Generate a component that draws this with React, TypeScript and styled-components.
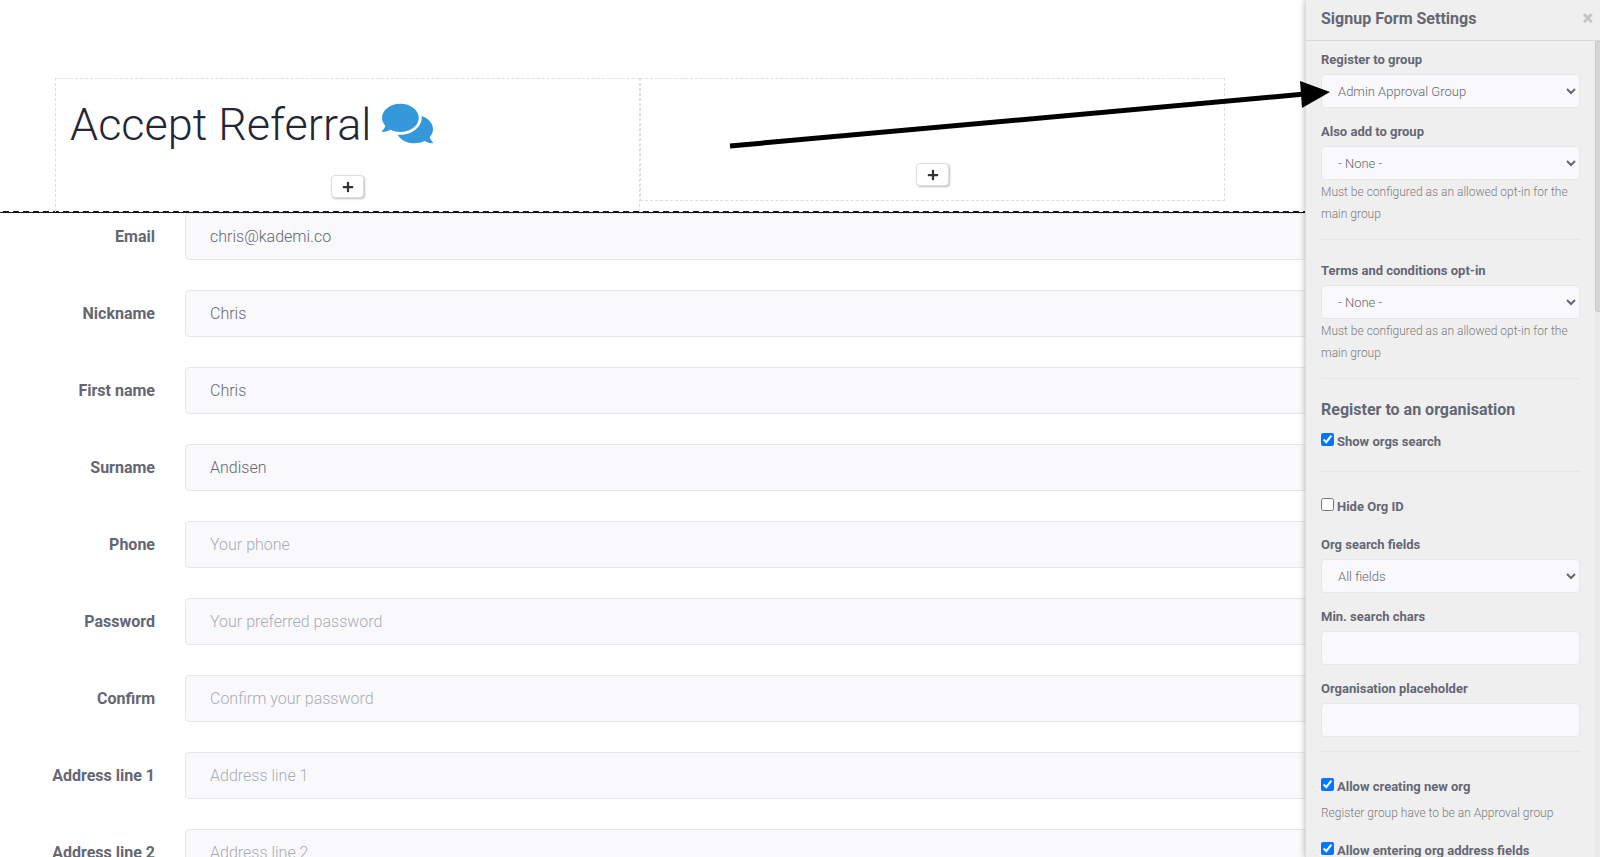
import React from 'react';
import styled, { createGlobalStyle } from 'styled-components';
import { FaComments, FaPlus } from 'react-icons/fa';

const GlobalStyle = createGlobalStyle`
  *, *::before, *::after { box-sizing: border-box; }
  body {
    margin: 0;
    background: #fff;
    color: #646773;
    font-family: Roboto, "Liberation Sans", sans-serif;
    font-size: 16px;
    font-weight: 300;
  }
  input, select, button { font: inherit; color: inherit; }
`;

const Page = styled.div`
  display: flex;
  height: 100vh;
  overflow: hidden;
`;

const Main = styled.main`
  flex: 1;
  min-width: 0;
  overflow: hidden;
`;

const Hero = styled.section`
  display: grid;
  grid-template-columns: 1fr 1fr;
  align-items: start;
  height: 213px;
  padding: 78px 80px 0 55px;
  overflow: hidden;
  border-bottom: 1px solid #15151c;
  background: repeating-linear-gradient(to right, transparent 0 3px, #15151c 3px 9px, transparent 9px 10px)
    bottom / 100% 1px no-repeat;
`;

const Column = styled.div<{ $tall?: boolean }>`
  display: flex;
  flex-direction: column;
  align-items: center;
  justify-content: flex-end;
  height: ${(p) => (p.$tall ? 134 : 123)}px;
  padding: 16px 14px 14px;
  border: 1px dashed #ddd;
  border-bottom-style: ${(p) => (p.$tall ? 'none' : 'dashed')};
`;

const Title = styled.h1`
  display: flex;
  align-items: center;
  align-self: stretch;
  gap: 11px;
  margin: 0 0 20px;
  color: #242736;
  font-size: 45px;
  font-weight: 300;
  line-height: 60px;

  svg { margin-bottom: 4px; color: #3598db; font-size: 51px; }
`;

const AddButton = styled.button`
  display: flex;
  flex-shrink: 0;
  align-items: center;
  justify-content: center;
  width: 33px;
  height: 23px;
  padding: 0;
  border: 1px solid #ddd;
  border-radius: 4px;
  background: #fff;
  box-shadow: 1px 1px 2px rgba(0, 0, 0, 0.25);
  color: #333;
  font-size: 12px;
`;

const SignupForm = styled.form`
  display: flex;
  flex-direction: column;
  gap: 30px;
  margin-right: -16px;
`;

const FormRow = styled.div`
  display: grid;
  grid-template-columns: 155px 1fr;
  column-gap: 30px;
  align-items: center;
`;

const FormLabel = styled.label`
  font-weight: 700;
  text-align: right;
`;

const FormInput = styled.input`
  width: 100%;
  height: 47px;
  padding: 0 24px;
  border: 1px solid #e6e7ea;
  border-radius: 4px;
  background: #f9f9fc;

  &::placeholder { color: #a9abb3; opacity: 1; }
`;

const Panel = styled.aside`
  display: flex;
  flex-direction: column;
  width: 295px;
  border-left: 1px solid #ddd;
  background: #efefef;
  box-shadow: 0 0 6px rgba(0, 0, 0, 0.3);
  font-size: 13px;
`;

const PanelHeader = styled.header`
  display: flex;
  align-items: center;
  justify-content: space-between;
  height: 41px;
  padding: 0 7px 3px 15px;
  border-bottom: 1px solid #d9d9d9;
`;

const Heading = styled.h2`
  margin: 0;
  font-size: 16px;
  font-weight: 700;
  line-height: 20px;
`;

const SectionHeading = styled(Heading)`
  margin-bottom: 8px;
`;

const CloseButton = styled.button`
  padding: 0 0 2px;
  border: 0;
  background: none;
  color: #c4c4c4;
  font-size: 20px;
  font-weight: 900;
  line-height: 20px;
`;

const PanelBody = styled.div`
  display: flex;
  flex: 1;
  min-height: 0;
`;

const Fields = styled.div`
  flex: 1;
  padding: 9px 15px 0;
  overflow: hidden;
`;

const Track = styled.div`
  width: 5px;
  background: #e9e9e9;
`;

const Thumb = styled.div`
  height: 271px;
  border: 1px solid #c8c8c8;
  border-right: 0;
  border-radius: 3px 0 0 3px;
  background: #d6d6d6;
`;

const Group = styled.div`
  margin-bottom: 14px;
`;

const CheckGroup = styled.div<{ $noted?: boolean }>`
  margin-bottom: ${(p) => (p.$noted ? 13 : 18)}px;
  padding-top: 4px;
`;

const FieldLabel = styled.label`
  display: block;
  margin-bottom: 4px;
  font-weight: 700;
  line-height: 20px;
`;

const Select = styled.select`
  display: block;
  width: 100%;
  height: 34px;
  padding: 0 12px;
  border: 1px solid #e6e7ea;
  border-radius: 4px;
  background: #f9f9fc;
`;

const TextInput = styled.input`
  display: block;
  width: 100%;
  height: 34px;
  padding: 0 12px;
  border: 1px solid #e6e7ea;
  border-radius: 4px;
  background: #f9f9fc;
`;

const Help = styled.p<{ $gap: number }>`
  margin: ${(p) => p.$gap}px 0 0;
  color: #7c7c80;
  font-size: 12px;
  line-height: 22px;
`;

const Divider = styled.hr`
  margin: 0 0 21px;
  border: 0;
  border-top: 1px solid #e5e5e5;

  ${CheckGroup} + &, ${Group} + ${Group} + & { margin-top: 1px; }
  ${CheckGroup} + & { margin-top: 19px; }
`;

const CheckLabel = styled.label`
  display: flex;
  gap: 3px;
  font-weight: 700;
  line-height: 20px;

  input { width: 13px; height: 13px; margin: 1px 0 0; }
`;

const Arrow = styled.svg`
  position: absolute;
  top: 70px;
  left: 720px;
  width: 620px;
  height: 90px;
  pointer-events: none;
`;

const FieldSection = styled.section`
  & > ${CheckGroup}:last-child { margin-bottom: 19px; }
`;

type RowProps = { id: string; label: string; value?: string; placeholder?: string; type?: string };

const rows: RowProps[] = [
  { id: 'email', label: 'Email', value: 'chris@kademi.co' },
  { id: 'nickname', label: 'Nickname', value: 'Chris' },
  { id: 'first', label: 'First name', value: 'Chris' },
  { id: 'surname', label: 'Surname', value: 'Andisen' },
  { id: 'phone', label: 'Phone', placeholder: 'Your phone' },
  { id: 'password', label: 'Password', placeholder: 'Your preferred password', type: 'password' },
  { id: 'confirm', label: 'Confirm', placeholder: 'Confirm your password', type: 'password' },
  { id: 'address1', label: 'Address line 1', placeholder: 'Address line 1' },
  { id: 'address2', label: 'Address line 2', placeholder: 'Address line 2' },
];

function SelectField({ id, label, option, help }: { id: string; label: string; option: string; help?: string }) {
  return (
    <Group>
      <FieldLabel htmlFor={id}>{label}</FieldLabel>
      <Select id={id}><option>{option}</option></Select>
      {help && <Help $gap={1}>{help}</Help>}
    </Group>
  );
}

function TextField({ id, label }: { id: string; label: string }) {
  return (
    <Group>
      <FieldLabel htmlFor={id}>{label}</FieldLabel>
      <TextInput id={id} type="text" />
    </Group>
  );
}

function CheckField({ label, checked, help }: { label: string; checked?: boolean; help?: string }) {
  return (
    <CheckGroup $noted={Boolean(help)}>
      <CheckLabel><input type="checkbox" defaultChecked={checked} />{label}</CheckLabel>
      {help && <Help $gap={5}>{help}</Help>}
    </CheckGroup>
  );
}

const optInHelp = 'Must be configured as an allowed opt-in for the main group';

export default function App() {
  return (
    <Page>
      <GlobalStyle />
      <Main>
        <Hero>
          <Column $tall>
            <Title>Accept Referral <FaComments /></Title>
            <AddButton type="button" aria-label="Add content"><FaPlus /></AddButton>
          </Column>
          <Column>
            <AddButton type="button" aria-label="Add content"><FaPlus /></AddButton>
          </Column>
        </Hero>
        <SignupForm>
          {rows.map((r) => (
            <FormRow key={r.id}>
              <FormLabel htmlFor={r.id}>{r.label}</FormLabel>
              <FormInput id={r.id} type={r.type ?? 'text'} defaultValue={r.value} placeholder={r.placeholder} />
            </FormRow>
          ))}
        </SignupForm>
      </Main>
      <Panel>
        <PanelHeader>
          <Heading>Signup Form Settings</Heading>
          <CloseButton type="button" aria-label="Close">×</CloseButton>
        </PanelHeader>
        <PanelBody>
          <Fields>
            <FieldSection>
              <SelectField id="group" label="Register to group" option="Admin Approval Group" />
              <SelectField id="also" label="Also add to group" option="- None -" help={optInHelp} />
            </FieldSection>
            <Divider />
            <FieldSection>
              <SelectField id="terms" label="Terms and conditions opt-in" option="- None -" help={optInHelp} />
            </FieldSection>
            <Divider />
            <FieldSection>
              <SectionHeading>Register to an organisation</SectionHeading>
              <CheckField label="Show orgs search" checked />
            </FieldSection>
            <Divider />
            <FieldSection>
              <CheckField label="Hide Org ID" />
              <SelectField id="search" label="Org search fields" option="All fields" />
              <TextField id="min" label="Min. search chars" />
              <TextField id="placeholder" label="Organisation placeholder" />
            </FieldSection>
            <Divider />
            <FieldSection>
              <CheckField
                label="Allow creating new org"
                checked
                help="Register group have to be an Approval group"
              />
              <CheckField label="Allow entering org address fields" checked />
            </FieldSection>
          </Fields>
          <Track><Thumb /></Track>
        </PanelBody>
      </Panel>
      <Arrow viewBox="0 0 620 90" aria-hidden="true">
        <path d="M10 76 L585 24" stroke="#000" strokeWidth="5" />
        <path d="M580 11 L610 22 L582 38 Z" fill="#000" />
      </Arrow>
    </Page>
  );
}
